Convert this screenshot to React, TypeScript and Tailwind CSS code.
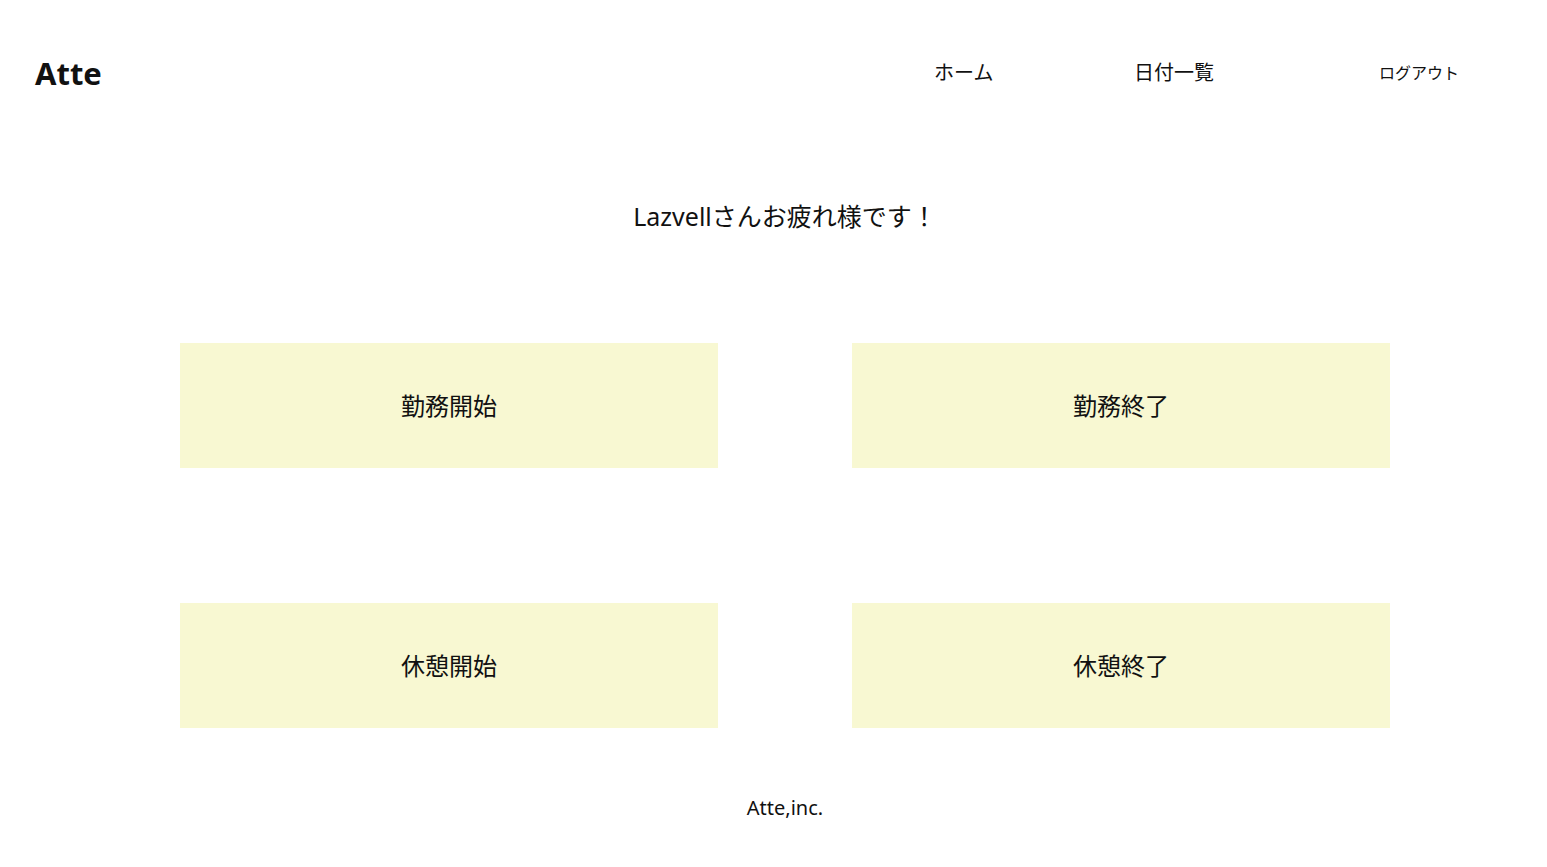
import React from 'react';

const font = { fontFamily: '"Noto Sans", "Noto Sans CJK JP", sans-serif' };

const App: React.FC = () => {
  const buttons = ['勤務開始', '勤務終了', '休憩開始', '休憩終了'];

  return (
    <div className="min-h-screen bg-white text-[#111]" style={font}>
      {/* Header */}
      <header className="flex items-center h-[146px] pl-[35px]">
        <h1 className="text-[31px] font-bold leading-none">Atte</h1>
        <nav className="ml-auto flex items-center">
          <a className="text-[20px] leading-none w-[61px]">ホーム</a>
          <a className="ml-[139px] text-[20px] leading-none w-[81px]">日付一覧</a>
          <a className="ml-[164px] mr-[85px] text-[16px] leading-none w-[83px]">ログアウト</a>
        </nav>
      </header>

      {/* Main */}
      <main className="ml-[180px] w-[1210px]">
        <p className="text-center text-[25px] leading-none pt-[58px]">Lazvellさんお疲れ様です！</p>
        <div className="grid grid-cols-2 gap-x-[134px] gap-y-[135px] mt-[114px]">
          {buttons.map((b) => (
            <button
              key={b}
              className="h-[125px] bg-[#f8f8d2] text-[24px] flex items-center justify-center"
              style={font}
            >
              {b}
            </button>
          ))}
        </div>
        <footer className="text-center text-[20px] leading-none mt-[70px] pb-[40px]">Atte,inc.</footer>
      </main>
    </div>
  );
};

export default App;
